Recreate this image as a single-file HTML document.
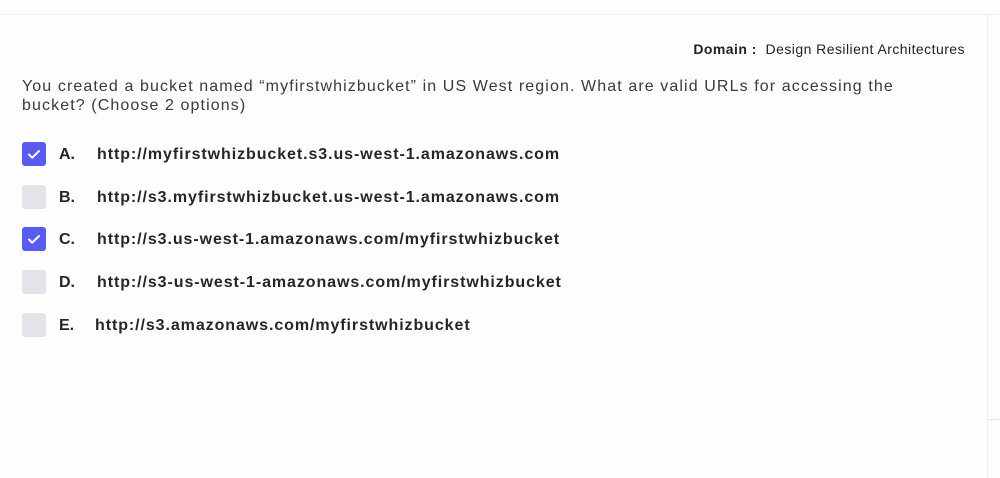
<!DOCTYPE html>
<html><head><style>
body{margin:0;width:1000px;height:478px;background:#fdfdfe;font-family:"Liberation Sans",sans-serif;position:relative;overflow:hidden}
.top{position:absolute;left:0;top:14px;width:1000px;height:1px;background:#ececf0}
.vl{position:absolute;left:987px;top:15px;width:1px;height:463px;background:#eeeef2}
.hl{position:absolute;left:988px;top:419px;width:12px;height:1px;background:#e6e6ea}
.dom{position:absolute;right:35px;top:41px;font-size:14px;color:#222;letter-spacing:0.45px}
.dom b{font-weight:bold}
.q{position:absolute;left:22px;top:77px;font-size:16px;line-height:19px;color:#3a3a3a;width:900px;letter-spacing:1.1px}
.opt{position:absolute;left:22px;height:24px;font-size:16px;font-weight:bold;color:#262626;letter-spacing:0.92px}
.cb{position:absolute;left:0;top:0;width:24px;height:24px;border-radius:3px;background:#e3e3ea}
.cb.on{background:#5a5cf0}
.l{position:absolute;left:37px;top:4px;letter-spacing:0}
.u{position:absolute;left:75px;top:4px;white-space:nowrap}
</style></head><body>
<div class="top"></div><div class="vl"></div><div class="hl"></div>
<div class="dom"><b>Domain :</b>&nbsp; Design Resilient Architectures</div>
<div class="q">You created a bucket named “myfirstwhizbucket” in US West region. What are valid URLs for accessing the bucket? (Choose 2 options)</div>
<div class="opt" style="top:142px"><div class="cb on"><svg width="24" height="24"><path d="M7 12.5l3.2 3.2L17 9" stroke="#fff" stroke-width="2" fill="none" stroke-linecap="round" stroke-linejoin="round"/></svg></div><span class="l">A.</span><span class="u">http://myfirstwhizbucket.s3.us-west-1.amazonaws.com</span></div>
<div class="opt" style="top:185px"><div class="cb"></div><span class="l">B.</span><span class="u">http://s3.myfirstwhizbucket.us-west-1.amazonaws.com</span></div>
<div class="opt" style="top:227px"><div class="cb on"><svg width="24" height="24"><path d="M7 12.5l3.2 3.2L17 9" stroke="#fff" stroke-width="2" fill="none" stroke-linecap="round" stroke-linejoin="round"/></svg></div><span class="l">C.</span><span class="u">http://s3.us-west-1.amazonaws.com/myfirstwhizbucket</span></div>
<div class="opt" style="top:270px"><div class="cb"></div><span class="l">D.</span><span class="u">http://s3-us-west-1-amazonaws.com/myfirstwhizbucket</span></div>
<div class="opt" style="top:313px"><div class="cb"></div><span class="l">E.</span><span class="u" style="left:73px">http://s3.amazonaws.com/myfirstwhizbucket</span></div>
</body></html>
